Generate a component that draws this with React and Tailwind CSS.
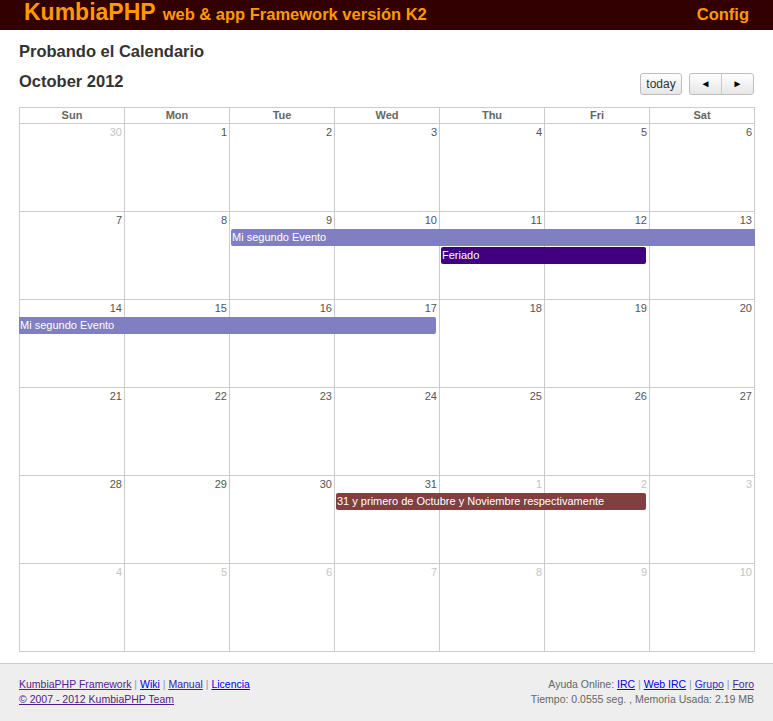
import React from "react";

const weeks = [
  [[30, false], [1, true], [2, true], [3, true], [4, true], [5, true], [6, true]],
  [[7, true], [8, true], [9, true], [10, true], [11, true], [12, true], [13, true]],
  [[14, true], [15, true], [16, true], [17, true], [18, true], [19, true], [20, true]],
  [[21, true], [22, true], [23, true], [24, true], [25, true], [26, true], [27, true]],
  [[28, true], [29, true], [30, true], [31, true], [1, false], [2, false], [3, false]],
  [[4, false], [5, false], [6, false], [7, false], [8, false], [9, false], [10, false]],
];

const colClass = [
  "col-start-1",
  "col-start-2",
  "col-start-3",
  "col-start-4",
  "col-start-5",
  "col-start-6",
  "col-start-7",
];

// events per week: placement classes are written in full
const events = {
  1: [
    {
      title: "Mi segundo Evento",
      place: "col-start-3 col-end-8 row-start-2 ml-[1px] mr-0 rounded-l-[2px]",
      color: "bg-[#8080c0]",
    },
    {
      title: "Feriado",
      place: "col-start-5 col-end-7 row-start-3 ml-[1px] mr-[4px] rounded-[2px]",
      color: "bg-[#400080]",
    },
  ],
  2: [
    {
      title: "Mi segundo Evento",
      place: "col-start-1 col-end-5 row-start-2 ml-[-1px] mr-[4px] rounded-r-[2px]",
      color: "bg-[#8080c0]",
    },
  ],
  4: [
    {
      title: "31 y primero de Octubre y Noviembre respectivamente",
      place: "col-start-4 col-end-7 row-start-2 ml-[1px] mr-[4px] rounded-[2px]",
      color: "bg-[#804040]",
    },
  ],
};

const days = ["Sun", "Mon", "Tue", "Wed", "Thu", "Fri", "Sat"];

const Sep = () => <span className="text-[#999]"> | </span>;

const App = () => {
  return (
    <div className="min-h-[721px] bg-white flex flex-col text-[#333]" style={{ fontFamily: '"Liberation Sans", Arial, sans-serif' }}>
      {/* top bar */}
      <div className="h-[30px] bg-[#330000] flex items-baseline justify-between px-[24px] leading-[24px] text-[#ff9900] font-bold">
        <div className="flex items-baseline">
          <span className="text-[23px]">KumbiaPHP</span>
          <span className="text-[16.5px] ml-[7px]">web &amp; app Framework versión K2</span>
        </div>
        <span className="text-[16.5px]">Config</span>
      </div>

      <div className="px-[19px] pt-[12px] flex-1">
        <h2 className="text-[16.5px] font-bold leading-[19px]">Probando el Calendario</h2>

        <div className="flex justify-between items-start mt-[10px] w-[735px]">
          <h2 className="text-[16.5px] font-bold leading-[19px] mt-[1px]">October 2012</h2>
          <div className="flex items-center gap-[7px] mt-[2px]">
            <button className="h-[22px] w-[42px] border border-[#bdbdbd] rounded-[3px] bg-gradient-to-b from-white to-[#e6e6e6] text-[12px] text-[#333] leading-[20px]">
              today
            </button>
            <div className="flex h-[22px] w-[65px] border border-[#bdbdbd] rounded-[3px] bg-gradient-to-b from-white to-[#e6e6e6]">
              <button className="w-[32px] border-r border-[#c8c8c8] text-[10px] text-black leading-[20px]">◄</button>
              <button className="flex-1 text-[10px] text-black leading-[20px]">►</button>
            </div>
          </div>
        </div>

        {/* calendar */}
        <div className="mt-[12px] w-[736px] border-l border-t border-[#cccccc]">
          <div className="grid grid-cols-[repeat(7,105px)]">
            {days.map((d) => (
              <div key={d} className="h-[16px] border-r border-b border-[#cccccc] text-center text-[11px] font-bold text-[#666] leading-[15px]">
                {d}
              </div>
            ))}
          </div>
          {weeks.map((week, wi) => (
            <div key={wi} className="grid grid-cols-[repeat(7,105px)] grid-rows-[17px_18px_18px_1fr] h-[88px]">
              {week.map(([n, cur], di) => (
                <div
                  key={di}
                  className={`${colClass[di]} row-start-1 row-end-5 border-r border-b border-[#cccccc] text-right pr-[2px] text-[11px] leading-[17px] ${cur ? "text-[#555]" : "text-[#c4c4c4]"}`}
                >
                  {n}
                </div>
              ))}
              {(events[wi] || []).map((ev, ei) => (
                <div
                  key={ei}
                  className={`${ev.place} ${ev.color} h-[17px] text-white text-[11px] leading-[17px] pl-[1px] whitespace-nowrap overflow-hidden z-10`}
                >
                  {ev.title}
                </div>
              ))}
            </div>
          ))}
        </div>
      </div>

      {/* footer */}
      <div className="mt-[11px] border-t border-[#cccccc] bg-[#eeeeee] px-[19px] pt-[13px] pb-[14px] flex justify-between text-[10.5px] leading-[15px] text-[#666]">
        <div>
          <div>
            <a href="#" className="underline text-[#551a8b]">KumbiaPHP Framework</a>
            <Sep />
            <a href="#" className="underline text-[#0000ee]">Wiki</a>
            <Sep />
            <a href="#" className="underline text-[#3a1ab0]">Manual</a>
            <Sep />
            <a href="#" className="underline text-[#0000ee]">Licencia</a>
          </div>
          <div>
            <a href="#" className="underline text-[#551a8b]">© 2007 - 2012 KumbiaPHP Team</a>
          </div>
        </div>
        <div className="text-right">
          <div>
            Ayuda Online: <a href="#" className="underline text-[#0000ee]">IRC</a>
            <Sep />
            <a href="#" className="underline text-[#0000ee]">Web IRC</a>
            <Sep />
            <a href="#" className="underline text-[#2a2ad0]">Grupo</a>
            <Sep />
            <a href="#" className="underline text-[#551a8b]">Foro</a>
          </div>
          <div>Tiempo: 0.0555 seg. , Memoria Usada: 2.19 MB</div>
        </div>
      </div>
    </div>
  );
};

export default App;
